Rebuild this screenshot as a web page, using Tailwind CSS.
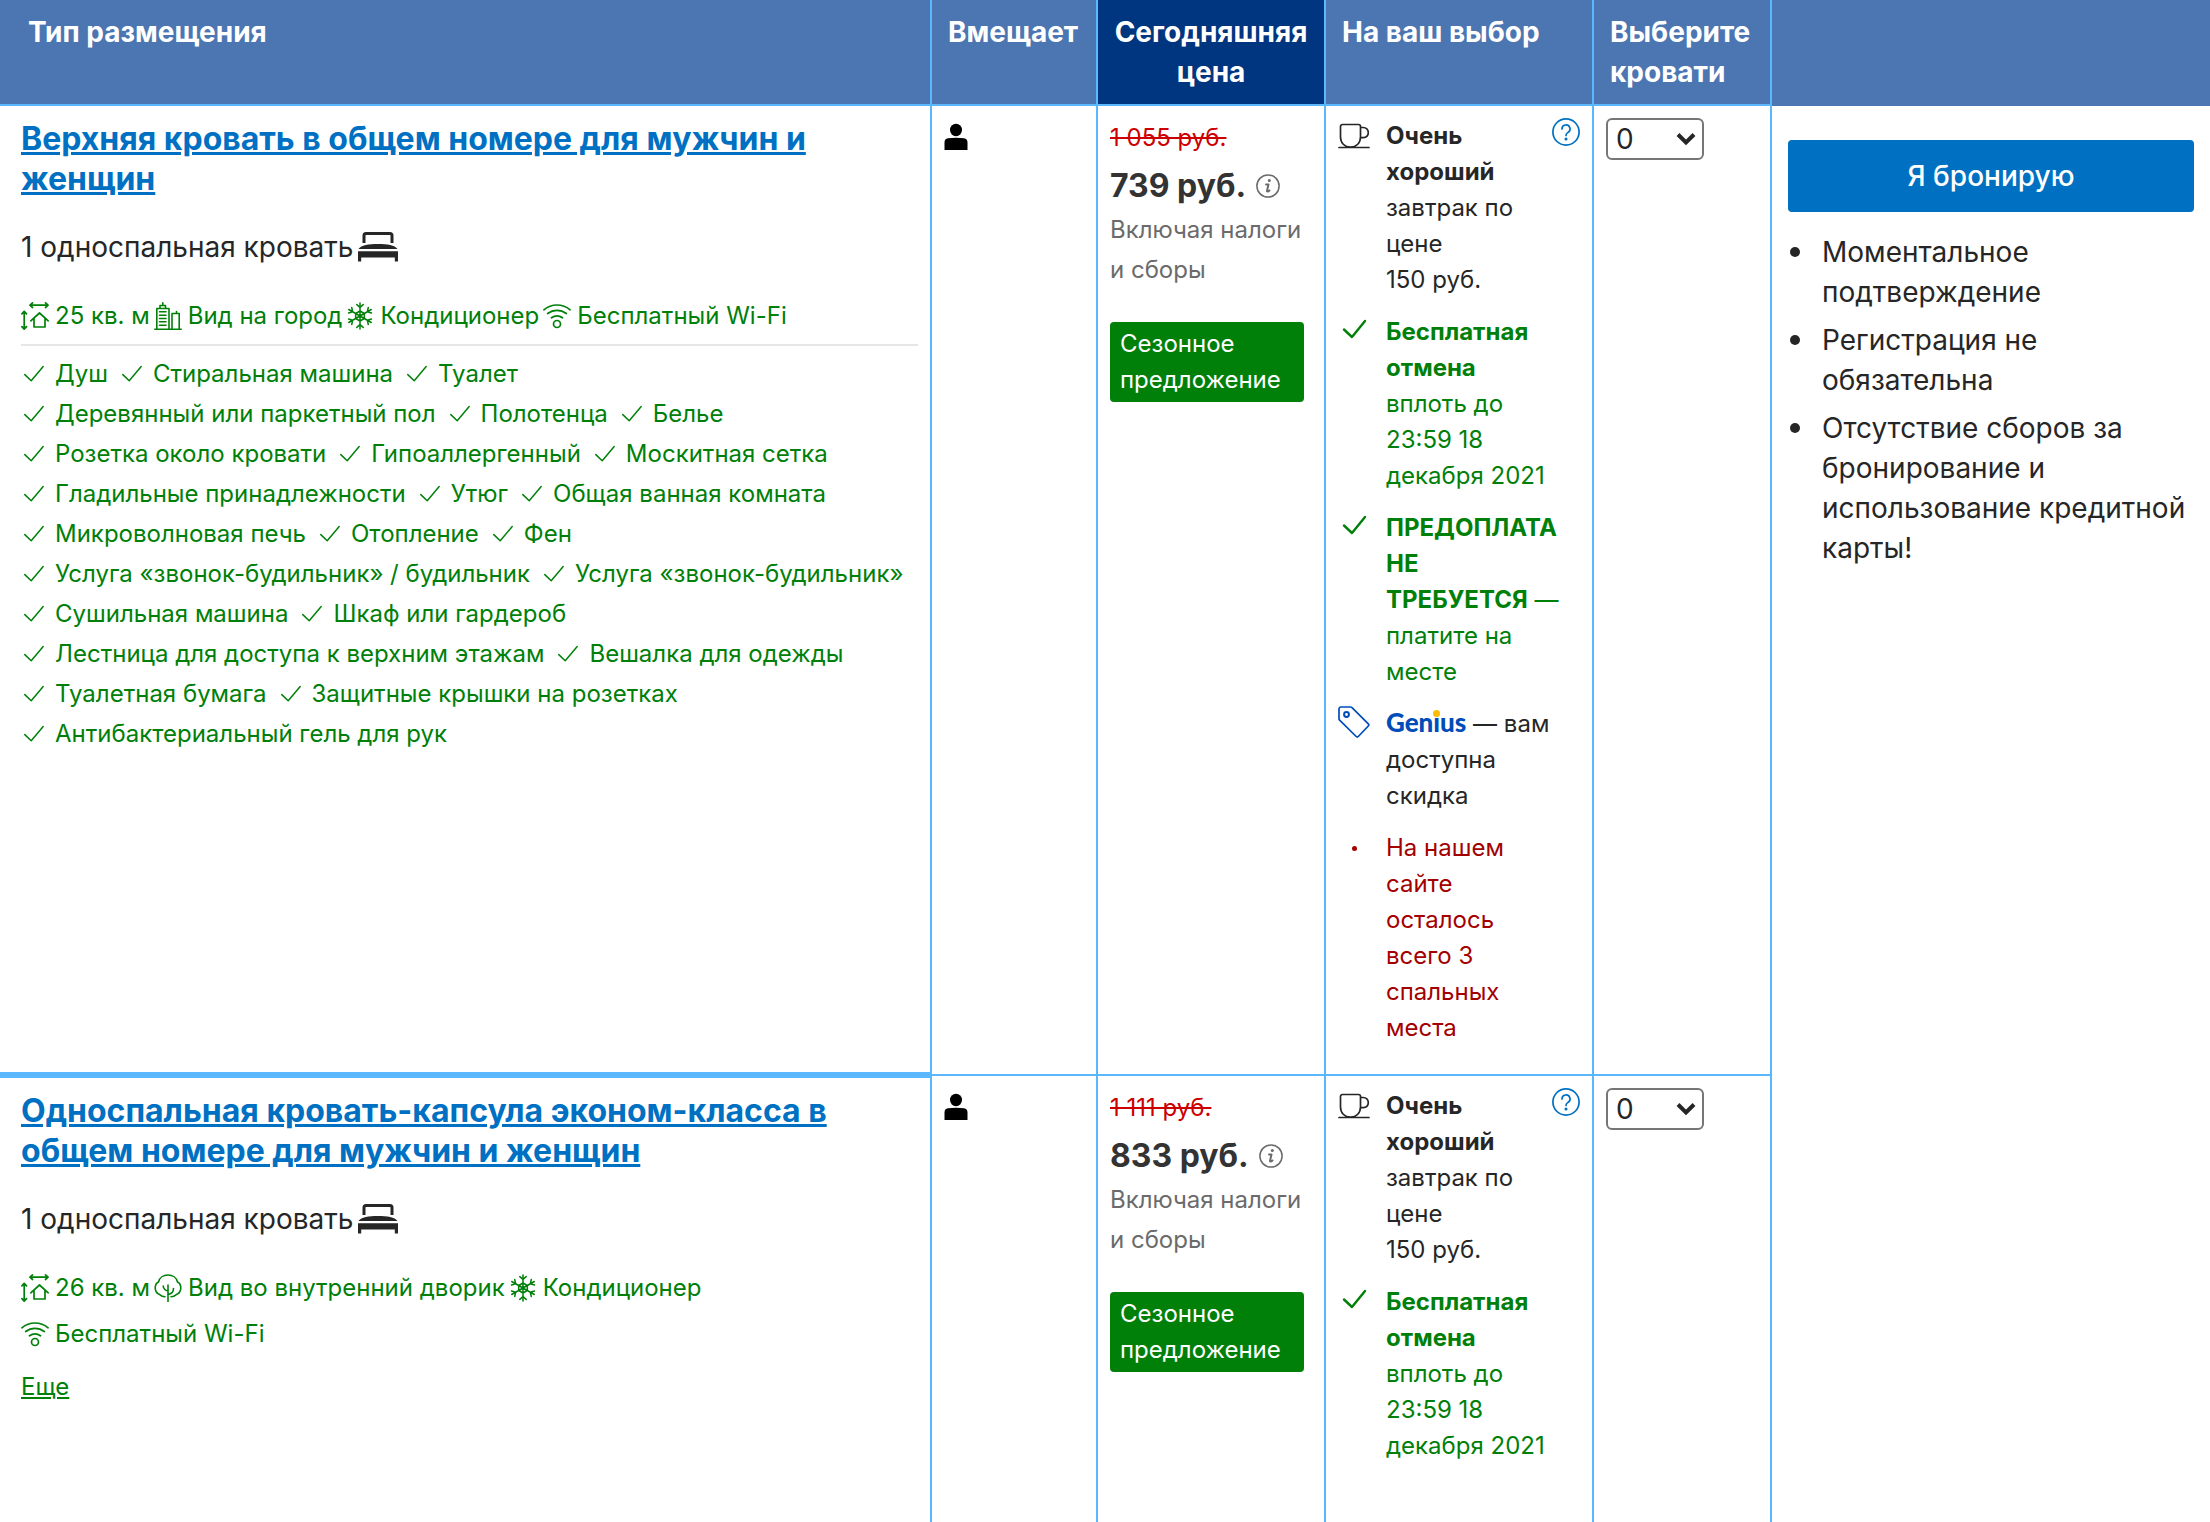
<!DOCTYPE html>
<html lang="ru">
<head>
<meta charset="utf-8">
<meta name="viewport" content="width=device-width, initial-scale=1">
<title>Выбор размещения</title>
<script src="https://cdn.jsdelivr.net/npm/@tailwindcss/browser@4"></script>
</head>
<body class="bg-white font-['Inter',sans-serif] text-[28px] leading-10 text-[#262626]">

<svg class="hidden" aria-hidden="true">
  <symbol id="i-check" viewBox="0 0 24 24" fill="none" stroke="currentColor" stroke-width="1.5" stroke-linecap="round" stroke-linejoin="round"><path d="M2.8 12.6l6.4 6.2L21.2 4.6"/></symbol>
  <symbol id="i-check-bold" viewBox="0 0 32 32" fill="none" stroke="currentColor" stroke-width="2.4" stroke-linecap="round" stroke-linejoin="round"><path d="M6 15.5l8 7.5L27 7"/></symbol>
  <symbol id="i-size" viewBox="0 0 28 28" fill="none" stroke="currentColor" stroke-width="1.7" stroke-linecap="round" stroke-linejoin="round"><path d="M9 3.2h18M11.500 .9L9 3.200l2.500 2.300M24.500 .9L27 3.200l-2.500 2.300M3.200 9.500v17.500M.9 11.800L3.200 9.300l2.300 2.500M.9 24.700l2.300 2.500 2.300-2.500M9.800 18.800l8.700-7.800 8.700 7.800M13 16.500v8.500h11v-8.500"/></symbol>
  <symbol id="i-city" viewBox="0 0 28 28" fill="none" stroke="currentColor" stroke-width="1.600" stroke-linecap="round" stroke-linejoin="round"><path d="M.8 27.200h26.400M2.800 27V6.500h12.200V27M6 6.300V3.500h5.500v2.800M8.800 3.300V.8M18 27V11.500h7.200V27M22.500 11.300V9.500M5.500 9.800h6.500M5.500 13.200h6.500M5.500 16.500h6.500M5.500 19.800h6.500M5.500 23.200h6.500"/></symbol>
  <symbol id="i-snow" viewBox="0 0 28 28" fill="none" stroke="currentColor" stroke-width="1.500" stroke-linecap="round" stroke-linejoin="round"><path d="M14 1v26M2.740 7.500l22.520 13M2.740 20.500l22.520-13M14 9l4.330 2.500v5L14 19l-4.330-2.500v-5zM10.800 2.600L14 5.500l3.200-2.900M10.800 25.400L14 22.500l3.200 2.900M22.280 5.530l-.92 4.220 4.120 1.310M5.720 5.530l.92 4.220-4.120 1.310M22.280 22.470l-.92-4.220 4.120-1.310M5.720 22.470l.92-4.220-4.120-1.310"/></symbol>
  <symbol id="i-wifi" viewBox="0 0 28 28" fill="none" stroke="currentColor" stroke-width="1.700" stroke-linecap="round"><circle cx="14" cy="22" r="3.500"/><path d="M8.500 15.800c3.300-2.400 7.700-2.400 11 0M4.700 11.500c5.600-4.300 13-4.300 18.600 0M.9 7.800c7.700-6.400 18.500-6.400 26.200 0"/></symbol>
  <symbol id="i-tree" viewBox="0 0 28 28" fill="none" stroke="currentColor" stroke-width="1.600" stroke-linecap="round" stroke-linejoin="round"><path d="M14 27.500V11M14 20.500c3.500-.5 5.500-2.500 5.500-6M14 17c-2.800-.5-4.500-2-4.800-5M11 22.700c-2.500 0-4-.8-5-2C3 19.500 1.200 17 1.200 14c0-3 1.300-5 3.300-6C5.500 3.500 9.500 1 14 1s8.500 2.500 9.500 7c2 1 3.300 3 3.300 6s-1.800 5.500-4.800 6.700c-1 1.200-2.500 2-5 2"/></symbol>
  <symbol id="i-bed" viewBox="0 0 42 30" fill="currentColor"><path d="M7 11V3.500a2 2 0 0 1 2-2h24a2 2 0 0 1 2 2V11" fill="none" stroke="currentColor" stroke-width="3"/><path d="M1.500 17C4 13 12 12 21 12s17 1 19.500 5zM1 19.200h40V29.500h-3.200v-4H4.200v4H1z"/></symbol>
  <symbol id="i-person" viewBox="0 0 24 28" fill="currentColor"><ellipse cx="12" cy="7" rx="6" ry="6.200"/><path d="M.500 27v-7.500c0-2.500 1.300-4 3.500-4.200 5-.8 11-.8 16 0 2.200.2 3.500 1.700 3.500 4.200V27z"/></symbol>
  <symbol id="i-cup" viewBox="0 0 32 28" fill="none" stroke="currentColor" stroke-width="1.700" stroke-linecap="round" stroke-linejoin="round"><path d="M1 25.500h30M2.500 4.500a2 2 0 0 1 2-2h16a2 2 0 0 1 2 2V15c0 6-4 10-10 10s-10-4-10-10zM22.500 5.500h2.800a5 5 0 0 1 5 5c0 3-2 5-5 5.200h-2.800"/></symbol>
  <symbol id="i-help" viewBox="0 0 28 28" fill="none" stroke="currentColor" stroke-width="1.700" stroke-linecap="round" stroke-linejoin="round"><circle cx="14" cy="14" r="13.100"/><path d="M10 11a4 4 0 1 1 6 3.400c-1.300.8-2 1.500-2 3"/><circle cx="14" cy="21" r=".7" fill="currentColor"/></symbol>
  <symbol id="i-info" viewBox="0 0 24 24" fill="none" stroke="currentColor" stroke-width="1.500" stroke-linecap="round" stroke-linejoin="round"><circle cx="12" cy="12" r="11.100"/><path d="M10 10.500h2.500l-1.500 6.200c-.2 1 .8 1.300 2.500-.2" stroke-width="2"/><circle cx="13.300" cy="6.500" r="1.500" fill="currentColor" stroke="none"/></symbol>
  <symbol id="i-tag" viewBox="0 0 32 32" fill="none" stroke="currentColor" stroke-width="1.700" stroke-linejoin="round"><path d="M1 3a2 2 0 0 1 2-2h9.500c.6 0 1 .2 1.500.6l16.300 16.300a1.500 1.500 0 0 1 0 2.100L20.300 30.500a1.500 1.500 0 0 1-2.100 0L1.600 14.200c-.4-.4-.6-.9-.6-1.500z"/><circle cx="8.500" cy="8.500" r="2.400" stroke-width="2"/></symbol>
</svg>

<table class="h-screen w-full table-fixed border-collapse">
  <colgroup>
    <col>
    <col class="w-[166px]">
    <col class="w-[228px]">
    <col class="w-[268px]">
    <col class="w-[178px]">
    <col class="w-[439px]">
  </colgroup>
  <thead>
    <tr class="h-px bg-[#4c76b2] text-left align-top text-white">
      <th scope="col" class="border-r-2 border-b-2 border-[#5bb8ff] px-7 py-3 font-bold">Тип размещения</th>
      <th scope="col" class="border-r-2 border-b-2 border-[#5bb8ff] py-3 pl-4 font-bold">Вмещает</th>
      <th scope="col" class="border-r-2 border-b-2 border-[#5bb8ff] bg-[#003580] py-3 text-center font-bold">Сегодняшняя цена</th>
      <th scope="col" class="border-r-2 border-b-2 border-[#5bb8ff] px-4 py-3 font-bold">На ваш выбор</th>
      <th scope="col" class="border-r-2 border-b-2 border-[#5bb8ff] py-3 pl-4 font-bold">Выберите кровати</th>
      <td class="border-b-2 border-b-[#4c76b2]"></td>
    </tr>
  </thead>
  <tbody>
    <tr class="h-px align-top">
      <td class="border-r-2 border-b-6 border-[#5bb8ff] pt-[13px] pr-5 pl-[21px]">
        <h2 class="text-[32px] font-bold text-[#0071c2]"><a href="#room-1" class="underline">Верхняя кровать в общем номере для мужчин и женщин</a></h2>
        <p class="mt-7 flex items-center gap-1">1 односпальная кровать <svg class="h-[30px] w-[42px]"><use href="#i-bed"/></svg></p>
        <ul class="mt-[26px] flex flex-wrap gap-x-1 text-2xl leading-[46px] text-[#008009]">
          <li class="flex items-center gap-1.5"><svg class="size-7"><use href="#i-size"/></svg>25 кв. м</li>
          <li class="flex items-center gap-1.5"><svg class="size-7"><use href="#i-city"/></svg>Вид на город</li>
          <li class="flex items-center gap-1.5"><svg class="size-7"><use href="#i-snow"/></svg>Кондиционер</li>
          <li class="flex items-center gap-1.5"><svg class="size-7"><use href="#i-wifi"/></svg>Бесплатный Wi-Fi</li>
        </ul>
        <hr class="mt-[5px] -mr-2 border-t-2 border-[#e6e6e6]">
        <ul class="mt-2 -mr-2 flex flex-wrap gap-x-3 pl-px text-2xl leading-10 text-[#008009]">
          <li class="flex items-center gap-[9px]"><svg class="size-6"><use href="#i-check"/></svg>Душ</li>
          <li class="flex items-center gap-[9px]"><svg class="size-6"><use href="#i-check"/></svg>Стиральная машина</li>
          <li class="flex items-center gap-[9px]"><svg class="size-6"><use href="#i-check"/></svg>Туалет</li>
          <li class="flex items-center gap-[9px]"><svg class="size-6"><use href="#i-check"/></svg>Деревянный или паркетный пол</li>
          <li class="flex items-center gap-[9px]"><svg class="size-6"><use href="#i-check"/></svg>Полотенца</li>
          <li class="flex items-center gap-[9px]"><svg class="size-6"><use href="#i-check"/></svg>Белье</li>
          <li class="flex items-center gap-[9px]"><svg class="size-6"><use href="#i-check"/></svg>Розетка около кровати</li>
          <li class="flex items-center gap-[9px]"><svg class="size-6"><use href="#i-check"/></svg>Гипоаллергенный</li>
          <li class="flex items-center gap-[9px]"><svg class="size-6"><use href="#i-check"/></svg>Москитная сетка</li>
          <li class="flex items-center gap-[9px]"><svg class="size-6"><use href="#i-check"/></svg>Гладильные принадлежности</li>
          <li class="flex items-center gap-[9px]"><svg class="size-6"><use href="#i-check"/></svg>Утюг</li>
          <li class="flex items-center gap-[9px]"><svg class="size-6"><use href="#i-check"/></svg>Общая ванная комната</li>
          <li class="flex items-center gap-[9px]"><svg class="size-6"><use href="#i-check"/></svg>Микроволновая печь</li>
          <li class="flex items-center gap-[9px]"><svg class="size-6"><use href="#i-check"/></svg>Отопление</li>
          <li class="flex items-center gap-[9px]"><svg class="size-6"><use href="#i-check"/></svg>Фен</li>
          <li class="flex items-center gap-[9px]"><svg class="size-6"><use href="#i-check"/></svg>Услуга «звонок-будильник» / будильник</li>
          <li class="flex items-center gap-[9px]"><svg class="size-6"><use href="#i-check"/></svg>Услуга «звонок-будильник»</li>
          <li class="flex items-center gap-[9px]"><svg class="size-6"><use href="#i-check"/></svg>Сушильная машина</li>
          <li class="flex items-center gap-[9px]"><svg class="size-6"><use href="#i-check"/></svg>Шкаф или гардероб</li>
          <li class="flex items-center gap-[9px]"><svg class="size-6"><use href="#i-check"/></svg>Лестница для доступа к верхним этажам</li>
          <li class="flex items-center gap-[9px]"><svg class="size-6"><use href="#i-check"/></svg>Вешалка для одежды</li>
          <li class="flex items-center gap-[9px]"><svg class="size-6"><use href="#i-check"/></svg>Туалетная бумага</li>
          <li class="flex items-center gap-[9px]"><svg class="size-6"><use href="#i-check"/></svg>Защитные крышки на розетках</li>
          <li class="flex items-center gap-[9px]"><svg class="size-6"><use href="#i-check"/></svg>Антибактериальный гель для рук</li>
        </ul>
      </td>
      <td class="border-r-2 border-b-2 border-[#5bb8ff] px-3 pt-[17px]"><svg class="h-7 w-6 text-black" role="img" aria-label="1 гость"><use href="#i-person"/></svg></td>
      <td class="border-r-2 border-b-2 border-[#5bb8ff] pt-3 pr-5 pl-3 text-2xl leading-10">
        <p class="text-[#c00]"><s>1 055 руб.</s></p>
        <p class="mt-2 flex items-center gap-2.5 text-[32px] font-bold text-[#333]">739 руб. <svg class="size-6 text-[#6b6b6b]"><use href="#i-info"/></svg></p>
        <p class="mt-1 -mr-4 text-[#6b6b6b]">Включая налоги и сборы</p>
        <p class="mt-8 rounded-sm bg-[#008009] px-[10px] py-1 leading-9 text-white">Сезонное предложение</p>
      </td>
      <td class="border-r-2 border-b-2 border-[#5bb8ff] px-3 pt-3 pb-7 text-2xl leading-9">
        <ul class="flex flex-col gap-4">
          <li class="flex items-start gap-4">
            <svg class="mt-1 h-7 w-8 shrink-0"><use href="#i-cup"/></svg>
            <p class="flex-1"><b>Очень хороший</b> завтрак по цене 150&nbsp;руб.</p>
            <button type="button" aria-label="Подробнее о завтраке" class="text-[#0071c2]"><svg class="size-7"><use href="#i-help"/></svg></button>
          </li>
          <li class="flex items-start gap-4 pr-5 text-[#008009]">
            <svg class="size-8 shrink-0"><use href="#i-check-bold"/></svg>
            <p><b class="block">Бесплатная отмена</b>вплоть до 23:59&nbsp;18 декабря 2021</p>
          </li>
          <li class="flex items-start gap-4 pr-5 text-[#008009]">
            <svg class="size-8 shrink-0"><use href="#i-check-bold"/></svg>
            <p><b>ПРЕДОПЛАТА НЕ ТРЕБУЕТСЯ</b> — платите на месте</p>
          </li>
          <li class="flex items-start gap-4 pr-5">
            <svg class="size-8 shrink-0 text-[#004cb8]"><use href="#i-tag"/></svg>
            <p><span class="relative font-['Lato',sans-serif] text-[26px] leading-none font-black text-[#004cb8]">Genius<span class="absolute top-1 left-[47px] size-[7px] rounded-full bg-[#febb02]"></span></span> — вам доступна скидка</p>
          </li>
          <li class="flex items-start gap-4 pr-5 text-[#a30000]">
            <span class="flex h-9 w-8 shrink-0 items-center justify-center"><span class="size-[5px] rounded-full bg-current"></span></span>
            <p>На нашем сайте осталось всего 3 спальных места</p>
          </li>
        </ul>
      </td>
      <td class="border-r-2 border-b-2 border-[#5bb8ff] px-3 pt-3">
        <div class="relative w-[98px]">
          <select aria-label="Количество кроватей: верхняя кровать" class="block h-[42px] w-full appearance-none rounded-md border-2 border-[#767676] bg-white pl-2 text-[28px] leading-8"><option>0</option><option>1</option><option>2</option><option>3</option></select>
          <svg class="pointer-events-none absolute top-[14px] right-[8px] h-[14px] w-5" viewBox="0 0 20 14" fill="none" stroke="currentColor" stroke-width="4"><path d="M2 2.500l8 8 8-8"/></svg>
        </div>
      </td>
      <td rowspan="2" class="px-4 pt-[34px]">
        <button type="button" class="h-[72px] w-full rounded-sm bg-[#0071c2] font-medium text-white">Я бронирую</button>
        <ul class="mt-5 flex flex-col gap-2 pl-0.5">
          <li class="flex gap-[22px]"><span class="mt-[15px] size-[10px] shrink-0 rounded-full bg-current"></span>Моментальное подтверждение</li>
          <li class="flex gap-[22px]"><span class="mt-[15px] size-[10px] shrink-0 rounded-full bg-current"></span>Регистрация не обязательна</li>
          <li class="flex gap-[22px]"><span class="mt-[15px] size-[10px] shrink-0 rounded-full bg-current"></span>Отсутствие сборов за бронирование и использование кредитной карты!</li>
        </ul>
      </td>
    </tr>
    <tr class="align-top">
      <td class="border-r-2 border-[#5bb8ff] pt-[13px] pr-5 pl-[21px]">
        <h2 class="text-[32px] font-bold text-[#0071c2]"><a href="#room-2" class="underline">Односпальная кровать-капсула эконом-класса в общем номере для мужчин и женщин</a></h2>
        <p class="mt-7 flex items-center gap-1">1 односпальная кровать <svg class="h-[30px] w-[42px]"><use href="#i-bed"/></svg></p>
        <ul class="mt-[26px] flex flex-wrap gap-x-1 text-2xl leading-[46px] text-[#008009]">
          <li class="flex items-center gap-1.5"><svg class="size-7"><use href="#i-size"/></svg>26 кв. м</li>
          <li class="flex items-center gap-1.5"><svg class="size-7"><use href="#i-tree"/></svg>Вид во внутренний дворик</li>
          <li class="flex items-center gap-1.5"><svg class="size-7"><use href="#i-snow"/></svg>Кондиционер</li>
          <li class="flex items-center gap-1.5"><svg class="size-7"><use href="#i-wifi"/></svg>Бесплатный Wi-Fi</li>
        </ul>
        <a href="#more" class="mt-[10px] inline-block text-2xl leading-10 text-[#008009] underline">Еще</a>
      </td>
      <td class="border-r-2 border-[#5bb8ff] px-3 pt-[17px]"><svg class="h-7 w-6 text-black" role="img" aria-label="1 гость"><use href="#i-person"/></svg></td>
      <td class="border-r-2 border-[#5bb8ff] pt-3 pr-5 pl-3 text-2xl leading-10">
        <p class="text-[#c00]"><s>1 111 руб.</s></p>
        <p class="mt-2 flex items-center gap-2.5 text-[32px] font-bold text-[#333]">833 руб. <svg class="size-6 text-[#6b6b6b]"><use href="#i-info"/></svg></p>
        <p class="mt-1 -mr-4 text-[#6b6b6b]">Включая налоги и сборы</p>
        <p class="mt-8 rounded-sm bg-[#008009] px-[10px] py-1 leading-9 text-white">Сезонное предложение</p>
      </td>
      <td class="border-r-2 border-[#5bb8ff] px-3 pt-3 text-2xl leading-9">
        <ul class="flex flex-col gap-4">
          <li class="flex items-start gap-4">
            <svg class="mt-1 h-7 w-8 shrink-0"><use href="#i-cup"/></svg>
            <p class="flex-1"><b>Очень хороший</b> завтрак по цене 150&nbsp;руб.</p>
            <button type="button" aria-label="Подробнее о завтраке" class="text-[#0071c2]"><svg class="size-7"><use href="#i-help"/></svg></button>
          </li>
          <li class="flex items-start gap-4 pr-5 text-[#008009]">
            <svg class="size-8 shrink-0"><use href="#i-check-bold"/></svg>
            <p><b class="block">Бесплатная отмена</b>вплоть до 23:59&nbsp;18 декабря 2021</p>
          </li>
        </ul>
      </td>
      <td class="border-r-2 border-[#5bb8ff] px-3 pt-3">
        <div class="relative w-[98px]">
          <select aria-label="Количество кроватей: кровать-капсула" class="block h-[42px] w-full appearance-none rounded-md border-2 border-[#767676] bg-white pl-2 text-[28px] leading-8"><option>0</option><option>1</option><option>2</option><option>3</option></select>
          <svg class="pointer-events-none absolute top-[14px] right-[8px] h-[14px] w-5" viewBox="0 0 20 14" fill="none" stroke="currentColor" stroke-width="4"><path d="M2 2.500l8 8 8-8"/></svg>
        </div>
      </td>
    </tr>
  </tbody>
</table>
</body>
</html>
